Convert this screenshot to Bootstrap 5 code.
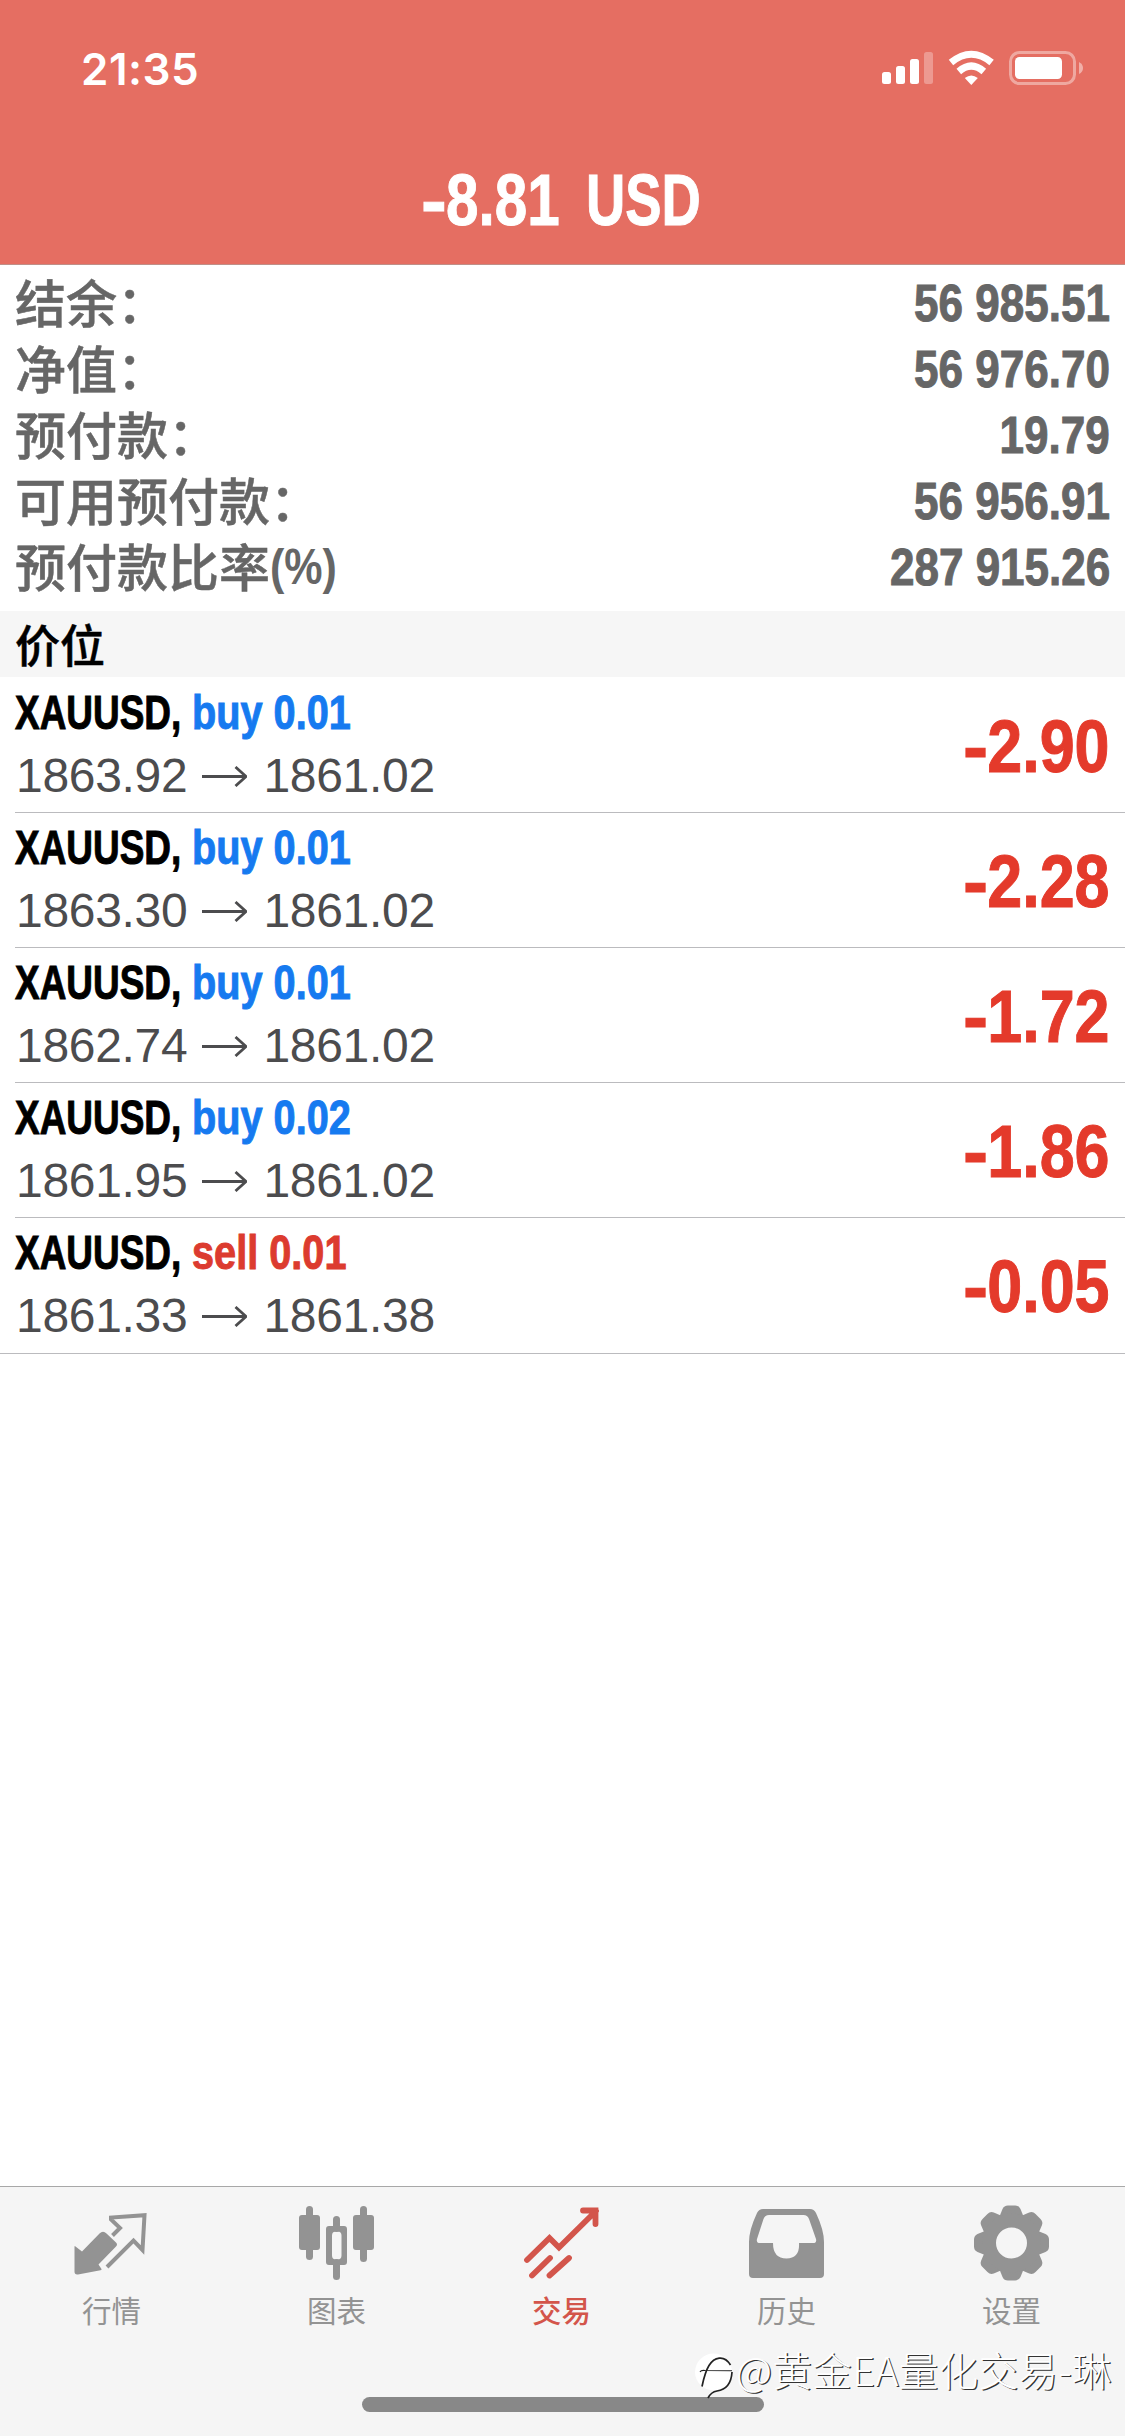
<!DOCTYPE html>
<html lang="zh-CN">
<head>
<meta charset="utf-8">
<meta name="viewport" content="width=device-width, initial-scale=1">
<title>交易</title>
<link href="https://cdn.jsdelivr.net/npm/bootstrap@5.3.0/dist/css/bootstrap.min.css" rel="stylesheet">
<style>
body{font-family:"Liberation Sans","Noto Sans CJK SC",sans-serif;background:#fff;line-height:1}
.screen{width:1125px;height:2436px;overflow:hidden}
.top-area{height:265px;background:#e56e62;border-bottom:1px solid #c08f88;color:#fff}
.clock{font:600 44px/1 Inter,sans-serif;padding-left:81px;letter-spacing:.5px}
.status-row{height:138px}
.status-icons{width:205px;height:40px;margin-right:42px}
.cond{display:inline-block;white-space:nowrap;font-weight:700;transform:scaleX(var(--sx,.86));transform-origin:0 50%;-webkit-text-stroke:1px currentColor}
.from-end{transform-origin:100% 50%}
.title-row{height:123px;font-size:73px;padding-left:421px}
.title-row .t-minus{width:25px;--sx:1.06}
.title-row .t-num{width:140px;--sx:.8}
.title-row .t-cur{--sx:.745}
.summary{height:346px;padding:5px 15px 0}
.summary-row{height:66px;color:#666}
.cn-label{font:500 51px/62px "Noto Sans CJK SC",sans-serif;height:66px;-webkit-text-stroke:.5px currentColor}
.cn-label .cond{font:700 50px/50px "Liberation Sans",sans-serif;--sx:.86;transform-origin:0 50%;vertical-align:3px;-webkit-text-stroke:0}
.sum-value{font-size:51px;--sx:.863;padding-top:1px}
.band{height:66px;background:#f6f6f6;color:#000;padding-left:15px;font:500 45px/65px "Noto Sans CJK SC",sans-serif;-webkit-text-stroke:.5px currentColor}
.positions{padding:1px 0 0 15px}
.pos-row{height:135px;border-bottom:1px solid #bbbbbe;padding:7px 15px 0 0}
.pos-list .pos-row:last-child{border-bottom:0}
.pos-list{border-bottom:1px solid #bbbbbe}
.sym{font-size:49px;line-height:55px;color:#000}
.sym .s-name{width:177px;--sx:.754}
.sym .s-side{--sx:.81}
.buy{color:#167af0}.sell{color:#dc3b2f}
.prices{font-size:48px;line-height:62px;color:#4c4c4e;margin-top:5px;letter-spacing:-.3px;padding-left:1px}
.prices svg{width:45px;height:21px;margin:0 16px 0 15px}
.profit{font-size:73.5px;line-height:74px;color:#e43a2b;margin-top:25px}
.profit .p-num{--sx:.855}
.profit .hy{display:inline-block;transform:scaleX(1.2);transform-origin:100% 50%;margin-right:-1px}
.tabs-bar{height:250px;border-top:1px solid #a8a8a8;background:#f5f5f5;color:#939393}
.tab-item{width:225px;height:150px;padding-right:2px;font:400 29.5px/36px "Noto Sans CJK SC",sans-serif}
.tab-item svg{width:84px;height:84px;margin:14px 0 6px}
.tab-item.on{color:#d3554b;font-weight:500}
.home-ind{width:402px;height:15px;border-radius:8px;background:#888;left:362px;top:2397px}
.wm{left:692px;top:2348px;color:#fff}
.wm span{font:300 39.5px/42px "Noto Sans CJK SC",sans-serif;text-shadow:1.3px 1.3px .3px #333;white-space:nowrap;margin-left:-2px;letter-spacing:.4px}
.wm svg{width:46px;height:52px}
</style>
</head>
<body>
<div class="screen position-relative d-flex flex-column">
  <header class="top-area">
    <div class="status-row d-flex justify-content-between align-items-center">
      <div class="clock">21:35</div>
      <svg class="status-icons" viewBox="0 0 205 40">
        <g fill="#fff"><rect x="4" y="23" width="9" height="12" rx="2.5"/><rect x="18" y="17" width="9" height="18" rx="2.5"/><rect x="32" y="10" width="9" height="25" rx="2.5"/><rect x="46" y="3" width="9" height="32" rx="2.5" opacity=".3"/></g>
        <g fill="none" stroke="#fff" stroke-width="7"><path d="M73 13.500Q93.300-3 113.600 13.500"/><path d="M80.800 22.500Q93.300 11.500 105.800 22.500"/></g>
        <path d="M86.800 29q6.500-5 13 0L93.300 36z" fill="#fff"/>
        <rect x="132.500" y="3.500" width="64" height="31" rx="9" fill="none" stroke="#fff" stroke-opacity=".4" stroke-width="3"/>
        <rect x="137" y="8" width="47" height="22" rx="4.500" fill="#fff"/><path d="M201 13q4 2 4 6t-4 6z" fill="#fff" opacity=".45"/>
      </svg>
    </div>
    <div class="title-row d-flex align-items-center"><span class="cond t-minus">-</span><span class="cond t-num">8.81</span><span class="cond t-cur">USD</span></div>
  </header>
  <section class="summary">
    <div class="summary-row d-flex justify-content-between align-items-center"><span class="cn-label">结余：</span><span class="cond from-end sum-value">56 985.51</span></div>
    <div class="summary-row d-flex justify-content-between align-items-center"><span class="cn-label">净值：</span><span class="cond from-end sum-value">56 976.70</span></div>
    <div class="summary-row d-flex justify-content-between align-items-center"><span class="cn-label">预付款：</span><span class="cond from-end sum-value">19.79</span></div>
    <div class="summary-row d-flex justify-content-between align-items-center"><span class="cn-label">可用预付款：</span><span class="cond from-end sum-value">56 956.91</span></div>
    <div class="summary-row d-flex justify-content-between align-items-center"><span class="cn-label">预付款比率<span class="cond">(%)</span></span><span class="cond from-end sum-value">287 915.26</span></div>
  </section>
  <div class="band">价位</div>
  <section class="pos-list"><div class="positions">
    <div class="pos-row d-flex justify-content-between"><div><div class="sym d-flex"><span class="cond s-name">XAUUSD,</span><span class="cond s-side buy">buy 0.01</span></div><div class="prices d-flex align-items-center"><span>1863.92</span><svg viewBox="0 0 45 21"><path d="M0 10.500H44M33.500 1L44 10.500 33.500 20" fill="none" stroke="currentColor" stroke-width="2.800"/></svg><span>1861.02</span></div></div><div class="profit"><span class="cond from-end p-num"><span class="hy">-</span>2.90</span></div></div>
    <div class="pos-row d-flex justify-content-between"><div><div class="sym d-flex"><span class="cond s-name">XAUUSD,</span><span class="cond s-side buy">buy 0.01</span></div><div class="prices d-flex align-items-center"><span>1863.30</span><svg viewBox="0 0 45 21"><path d="M0 10.500H44M33.500 1L44 10.500 33.500 20" fill="none" stroke="currentColor" stroke-width="2.800"/></svg><span>1861.02</span></div></div><div class="profit"><span class="cond from-end p-num"><span class="hy">-</span>2.28</span></div></div>
    <div class="pos-row d-flex justify-content-between"><div><div class="sym d-flex"><span class="cond s-name">XAUUSD,</span><span class="cond s-side buy">buy 0.01</span></div><div class="prices d-flex align-items-center"><span>1862.74</span><svg viewBox="0 0 45 21"><path d="M0 10.500H44M33.500 1L44 10.500 33.500 20" fill="none" stroke="currentColor" stroke-width="2.800"/></svg><span>1861.02</span></div></div><div class="profit"><span class="cond from-end p-num"><span class="hy">-</span>1.72</span></div></div>
    <div class="pos-row d-flex justify-content-between"><div><div class="sym d-flex"><span class="cond s-name">XAUUSD,</span><span class="cond s-side buy">buy 0.02</span></div><div class="prices d-flex align-items-center"><span>1861.95</span><svg viewBox="0 0 45 21"><path d="M0 10.500H44M33.500 1L44 10.500 33.500 20" fill="none" stroke="currentColor" stroke-width="2.800"/></svg><span>1861.02</span></div></div><div class="profit"><span class="cond from-end p-num"><span class="hy">-</span>1.86</span></div></div>
    <div class="pos-row d-flex justify-content-between"><div><div class="sym d-flex"><span class="cond s-name">XAUUSD,</span><span class="cond s-side sell">sell 0.01</span></div><div class="prices d-flex align-items-center"><span>1861.33</span><svg viewBox="0 0 45 21"><path d="M0 10.500H44M33.500 1L44 10.500 33.500 20" fill="none" stroke="currentColor" stroke-width="2.800"/></svg><span>1861.38</span></div></div><div class="profit"><span class="cond from-end p-num"><span class="hy">-</span>0.05</span></div></div>
  </div></section>
  <nav class="tabs-bar mt-auto d-flex">
    <div class="tab-item d-flex flex-column align-items-center">
      <svg viewBox="0 0 84 84" fill="currentColor"><path d="M4.500 46q0-1.500 1-.500L12 50.500 29.500 32.500q3.500-3.500 7 0L46 41.500q2 2 0 4L28.500 63.500l3 4.500q.5 1-1 1.300L8 73.500q-3.500.500-3.500-3z"/><path d="M42.500 34.500L50 27 41 18.500V16.500L74.500 14.200 72.500 49 63.500 39.500 37 66" fill="none" stroke="currentColor" stroke-width="4"/></svg><span>行情</span></div>
    <div class="tab-item d-flex flex-column align-items-center">
      <svg viewBox="0 0 84 84" fill="currentColor"><rect x="4" y="14" width="21" height="35" rx="3"/><rect x="11" y="5" width="7" height="54" rx="3.500"/><rect x="58" y="14" width="21" height="35" rx="3"/><rect x="65" y="5" width="7" height="56" rx="3.500"/><rect x="38" y="15" width="7" height="16" rx="3.500"/><rect x="38" y="58" width="7" height="21" rx="3.500"/><path fill-rule="evenodd" d="M34 25h15q3 0 3 3v33q0 3-3 3H34q-3 0-3-3V28q0-3 3-3zm7 5.500q-4 0-4 4v20q0 4 4 4h1.500q4 0 4-4v-20q0-4-4-4z"/></svg><span>图表</span></div>
    <div class="tab-item on d-flex flex-column align-items-center">
      <svg viewBox="0 0 84 84" fill="none" stroke="currentColor" stroke-width="5.800" stroke-linecap="round"><path d="M7 59L29.500 37 39 46.500 76 10M63 9.500H75.500V23" /><path d="M12 74.500L30 57M29.500 74.500L49 57" /></svg><span>交易</span></div>
    <div class="tab-item d-flex flex-column align-items-center">
      <svg viewBox="0 0 84 84" fill="currentColor"><path fill-rule="evenodd" d="M18 8H65q4 0 6 4 8 17 8 29V73q0 4-4 4H8q-4 0-4-4V41Q4 29 12 12q2-4 6-4zM24 14q-4 0-5.500 4L12 38q-1 4 3 4H28q0 15.500 13.500 15.500T54 42H68q4 0 3-4L64 18q-1.500-4-5.500-4z"/></svg><span>历史</span></div>
    <div class="tab-item d-flex flex-column align-items-center">
      <svg viewBox="0 0 84 84"><defs><path id="tooth" d="M28.500 18L32.500 8Q34 4.500 38 4.500H45Q49 4.500 50.500 8L54.500 18z"/></defs><g fill="currentColor"><use href="#tooth"/><use href="#tooth" transform="rotate(45 41.500 42)"/><use href="#tooth" transform="rotate(90 41.500 42)"/><use href="#tooth" transform="rotate(135 41.500 42)"/><use href="#tooth" transform="rotate(180 41.500 42)"/><use href="#tooth" transform="rotate(225 41.500 42)"/><use href="#tooth" transform="rotate(270 41.500 42)"/><use href="#tooth" transform="rotate(315 41.500 42)"/></g><circle cx="41.500" cy="42" r="22.500" fill="none" stroke="currentColor" stroke-width="14"/></svg><span>设置</span></div>
  </nav>
  <div class="home-ind position-absolute"></div>
  <div class="wm position-absolute d-flex"><svg viewBox="0 0 46 52"><circle cx="21.500" cy="24" r="18.500" fill="#fff"/><g fill="none" stroke="#222"><path d="M10 38.500C12 29 13 24 17 17.500 22 9.500 32 6 38.500 17" stroke-width="1.700"/><path d="M8 24Q9 22 13 22.500L40 22.800" stroke-width="1.100"/><path d="M40 24Q39 41 25 43 19 44 16 50" stroke-width="1.700"/></g></svg><span>@黄金EA量化交易-琳</span></div>
</div>
<script src="https://cdn.jsdelivr.net/npm/bootstrap@5.3.0/dist/js/bootstrap.bundle.min.js"></script>
</body>
</html>
